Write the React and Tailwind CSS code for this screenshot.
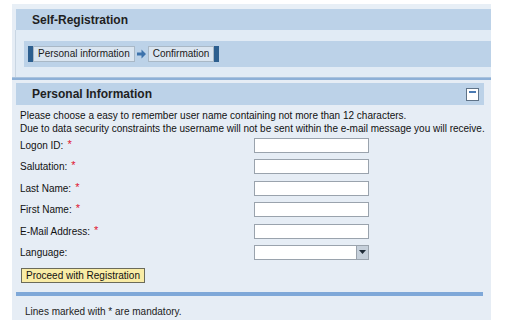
const FIELDS = [
  { label: "Logon ID:", required: true },
  { label: "Salutation:", required: true },
  { label: "Last Name:", required: true },
  { label: "First Name:", required: true },
  { label: "E-Mail Address:", required: true },
  { label: "Language:", required: false, select: true },
]

function Step({ children }) {
  return (
    <div className="h-[16px] px-[4px] flex items-center bg-[#dae5f0] border border-[#a9b8c6] text-[10px] text-[#1a1a1a] leading-none">
      {children}
    </div>
  )
}

function App() {
  return (
    <div className="w-[508px] h-[327px] bg-white pl-[12px] pt-[4px] font-['Liberation_Sans',Arial,sans-serif]">
      <div className="w-[479px] h-[316px] bg-[#e6edf5] flex flex-col [&>*]:shrink-0">
        {/* Self-Registration */}
        <div className="h-[5px] bg-[#e8eff6]" />
        <div className="ml-[4px] h-[21px] bg-[#bcd2e8] flex items-center pl-[16px]">
          <span className="text-[12px] font-bold text-[#1f1f1f]">Self-Registration</span>
        </div>
        <div className="ml-[3px] h-[47px] border-l border-[#c9d6e3] bg-[#e1ebf5] pt-[11px]">
          <div className="ml-[8px] h-[26px] bg-[#bcd2e8] flex items-center pl-[4px]">
            <div className="w-[5px] h-[16px] bg-[#2d5f8f]" />
            <Step>Personal information</Step>
            <svg width="11" height="10" viewBox="0 0 11 10" className="mx-[1px]">
              <path d="M1 3.5h4.5V0.5L10 5l-4.5 4.5V6.5H1z" fill="#3d72ab" />
            </svg>
            <Step>Confirmation</Step>
            <div className="w-[5px] h-[16px] bg-[#2d5f8f]" />
          </div>
        </div>
        <div className="h-[1px] bg-[#aac3de]" />
        <div className="h-[2px] bg-[#8db0d7]" />

        {/* Personal Information */}
        <div className="h-[3px] bg-[#e6edf5]" />
        <div className="ml-[4px] mr-[7px] h-[22px] bg-[#bcd2e8] flex items-center justify-between pl-[16px] pr-[5px]">
          <span className="text-[12px] font-bold text-[#1f1f1f]">Personal Information</span>
          <div className="w-[13px] h-[13px] bg-white border border-[#5f7388] pt-[2px] px-[2px]">
            <div className="h-[2px] bg-[#4a7ab2]" />
          </div>
        </div>

        <div className="pl-[8px] pt-[4px] text-[10px] leading-[13px] text-[#111]">
          <p>Please choose a easy to remember user name containing not more than 12 characters.</p>
          <p>Due to data security constraints the username will not be sent within the e-mail message you will receive.</p>
        </div>

        <div className="pl-[8px] pt-[3px] flex flex-col">
          {FIELDS.map((f) => (
            <div key={f.label} className="h-[21.4px] flex items-start">
              <div className="w-[234px] h-[15px] flex items-center text-[10px] text-[#111]">
                {f.label}
                {f.required && <span className="ml-[4px] mt-[-2px] text-[#e0102e] text-[11px] leading-none">*</span>}
              </div>
              {f.select ? (
                <div className="w-[115px] h-[15px] bg-white border border-[#9aa3ad] flex justify-end">
                  <div className="w-[12px] h-full bg-[#c6d0db] border-l border-[#9aa3ad] flex items-center justify-center">
                    <svg width="7" height="4" viewBox="0 0 7 4">
                      <path d="M0 0h7L3.5 4z" fill="#1e2a36" />
                    </svg>
                  </div>
                </div>
              ) : (
                <div className="w-[115px] h-[15px] bg-white border border-[#9aa3ad]" />
              )}
            </div>
          ))}
        </div>

        <div className="pl-[9px] mt-[2px] flex">
          <button className="h-[15px] px-[4px] bg-[#f9eca6] border border-[#6b6b5a] text-[10px] leading-none text-[#111]">
            Proceed with Registration
          </button>
        </div>

        <div className="ml-[4px] mr-[8px] mt-[9px] h-[4px] bg-[#7fa8d8]" />

        <div className="pl-[13px] pt-[9px] text-[10px] leading-[13px] text-[#222]">
          Lines marked with * are mandatory.
        </div>
      </div>
    </div>
  )
}

export default App
